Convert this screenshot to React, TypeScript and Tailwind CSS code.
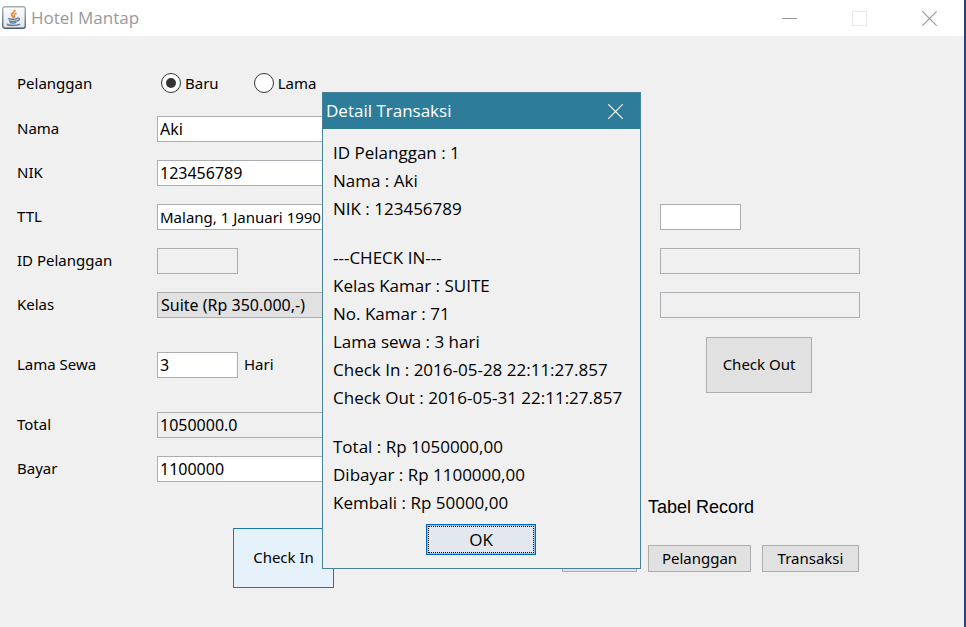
import type { InputHTMLAttributes, ReactNode } from "react";
import { clsx } from "clsx";

function JavaIcon() {
  return (
    <svg width="24" height="24" viewBox="0 0 24 24" fill="none" aria-hidden="true">
      <defs>
        <linearGradient id="tile" x1="0" y1="0" x2="0" y2="1">
          <stop offset="0" stopColor="#ffffff" />
          <stop offset="1" stopColor="#dde1e5" />
        </linearGradient>
        <linearGradient id="edge" x1="0" y1="0" x2="0" y2="1">
          <stop offset="0" stopColor="#a3abb3" />
          <stop offset="1" stopColor="#465a6b" />
        </linearGradient>
      </defs>
      <rect x="0.75" y="0.75" width="22.5" height="21.5" rx="2" fill="url(#tile)" stroke="url(#edge)" strokeWidth="1.3" />
      <path d="M12.800 4.300c.6 1.800-3.600 2.600-3.200 4.400.2 1 1.300 1.400 1.600 2.500" stroke="#e58a2e" strokeWidth="1.8" strokeLinecap="round" />
      <path d="M14.200 7.300c-1.800.7-2.500 1.400-1.800 2.300.4.6.3 1.100-.3 1.700" stroke="#e58a2e" strokeWidth="1.300" strokeLinecap="round" />
      <path d="M6.500 12.600c2.200.7 6.200.7 8.500 0M7.500 14.800c1.800.6 4.800.6 6.500 0M8.200 16.700c1.600.5 3.900.5 5.500 0" stroke="#55799b" strokeWidth="1.400" strokeLinecap="round" />
      <path d="M15.300 12.200c3-.6 2.800 2.200-.4 2.900" stroke="#55799b" strokeWidth="1.300" strokeLinecap="round" />
      <path d="M5.500 18.200c-1 1.300 9 1.600 12 .2" stroke="#55799b" strokeWidth="1.400" strokeLinecap="round" />
    </svg>
  );
}

function CrossIcon() {
  return (
    <svg width="15" height="15" viewBox="0 0 15 15" stroke="currentColor" aria-hidden="true">
      <path d="M0.300 0.300l14.400 14.400M14.700 0.300l-14.400 14.400" strokeWidth="1.100" />
    </svg>
  );
}

type FieldProps = InputHTMLAttributes<HTMLInputElement> & { compact?: boolean };

function Field({ className, compact, ...props }: FieldProps) {
  return (
    <input
      type="text"
      className={clsx(
        "h-[26px] border border-[#abadb3] px-0.5 pb-px outline-none",
        compact ? "text-[15px]" : "text-base",
        props.readOnly ? "bg-[#f0f0f0]" : "bg-white",
        className,
      )}
      {...props}
    />
  );
}

function Row({ label, id, children }: { label: string; id: string; children: ReactNode }) {
  return (
    <div className="flex h-[26px] items-center">
      <label htmlFor={id} className="w-[140px] shrink-0 pb-px">
        {label}
      </label>
      {children}
    </div>
  );
}

function Radio({ label, checked }: { label: string; checked?: boolean }) {
  return (
    <label className="flex items-center gap-1">
      <input
        type="radio"
        name="pelanggan"
        defaultChecked={checked}
        className="grid size-5 appearance-none place-items-center rounded-full border border-[#333333] bg-white before:size-[10px] before:rounded-full checked:before:bg-[#333333]"
      />
      {label}
    </label>
  );
}

const grayButton = "border border-[#adadad] bg-[#e1e1e1] pb-px";

const details = [
  ["ID Pelanggan : 1", "Nama : Aki", "NIK : 123456789"],
  [
    "---CHECK IN---",
    "Kelas Kamar : SUITE",
    "No. Kamar : 71",
    "Lama sewa : 3 hari",
    "Check In : 2016-05-28 22:11:27.857",
    "Check Out : 2016-05-31 22:11:27.857",
  ],
  ["Total : Rp 1050000,00", "Dibayar : Rp 1100000,00", "Kembali : Rp 50000,00"],
];

function DetailDialog() {
  return (
    <div className="absolute inset-0 flex items-start justify-center pt-[92px] pr-px">
      <div
        role="dialog"
        aria-labelledby="dialog-title"
        className="w-[319px] border border-[#47819a] bg-[#f0f0f0] font-['Open_Sans',sans-serif] text-[17px]"
      >
        <header className="flex h-9 items-center justify-between bg-[#2d7d9a] pr-[17px] pl-[3px] text-white">
          <h2 id="dialog-title">Detail Transaksi</h2>
          <button type="button" aria-label="Tutup">
            <CrossIcon />
          </button>
        </header>
        <div className="flex flex-col gap-[21px] px-[10px] pt-[10px] leading-7 whitespace-nowrap">
          {details.map((group) => (
            <div key={group[0]}>
              {group.map((line) => (
                <p key={line}>{line}</p>
              ))}
            </div>
          ))}
        </div>
        <div className="flex justify-center pt-[7px] pr-px pb-[13px]">
          <button type="button" className="h-[31px] w-[110px] border border-[#0067c0] bg-[#8fc0ee] p-px">
            <span className="flex h-full items-center justify-center border border-dotted border-black bg-[#e3e8f0]">
              OK
            </span>
          </button>
        </div>
      </div>
    </div>
  );
}

export default function App() {
  return (
    <div className="relative flex min-h-screen flex-col border-r-2 border-[#28456f] bg-[#f0f0f0] font-['Noto_Sans',sans-serif] text-[15px] text-black">
      <header className="flex h-9 items-center justify-between bg-white pr-[27px] pl-0.5 text-[#999999]">
        <div className="flex items-center gap-[5px]">
          <JavaIcon />
          <h1 className="font-['Open_Sans',sans-serif] text-[17px]">Hotel Mantap</h1>
        </div>
        <div className="flex items-center gap-[55px]">
          <button type="button" aria-label="Minimalkan" className="flex h-4 w-[15px] items-center">
            <span className="h-px w-full bg-[#999999]" />
          </button>
          <button type="button" aria-label="Maksimalkan" className="size-[15px] border border-[#e9e9e9]" />
          <button type="button" aria-label="Tutup">
            <CrossIcon />
          </button>
        </div>
      </header>

      <main className="flex justify-between pr-[104px] pl-[17px]">
        <form className="flex w-[340px] flex-col gap-[34px] pt-9">
          <div className="flex flex-col gap-[18px]">
            <fieldset className="flex h-[26px] items-center">
              <span className="w-[144px]">Pelanggan</span>
              <div className="flex gap-[35px]">
                <Radio label="Baru" checked />
                <Radio label="Lama" />
              </div>
            </fieldset>
            <Row label="Nama" id="nama">
              <Field id="nama" defaultValue="Aki" className="w-[200px]" />
            </Row>
            <Row label="NIK" id="nik">
              <Field id="nik" defaultValue="123456789" className="w-[200px]" />
            </Row>
            <Row label="TTL" id="ttl">
              <Field id="ttl" compact defaultValue="Malang, 1 Januari 1990" className="w-[200px]" />
            </Row>
            <Row label="ID Pelanggan" id="id-pelanggan">
              <Field id="id-pelanggan" readOnly className="w-[81px]" />
            </Row>
            <Row label="Kelas" id="kelas">
              <select
                id="kelas"
                className="h-[26px] w-[200px] appearance-none border border-[#adadad] bg-[#e1e1e1] px-[3px] pb-px text-base leading-5"
              >
                <option>Suite (Rp 350.000,-)</option>
              </select>
            </Row>
          </div>
          <Row label="Lama Sewa" id="lama-sewa">
            <Field id="lama-sewa" defaultValue="3" className="w-[81px]" />
            <span className="pb-px pl-1.5">Hari</span>
          </Row>
          <div className="flex flex-col gap-[18px]">
            <Row label="Total" id="total">
              <Field id="total" defaultValue="1050000.0" readOnly className="w-[200px]" />
            </Row>
            <Row label="Bayar" id="bayar">
              <Field id="bayar" defaultValue="1100000" className="w-[200px]" />
            </Row>
          </div>
          <button
            type="button"
            className="mt-3 mr-[23px] h-[60px] w-[101px] self-end border border-[#1a77b5] bg-[#e5f1fb] pb-px"
          >
            Check In
          </button>
        </form>

        <section className="flex flex-col items-end pt-[168px]">
          <div className="flex w-[200px] flex-col gap-[18px]">
            <Field aria-label="No. Kamar" className="w-[81px]" />
            <Field aria-label="Check In" readOnly />
            <Field aria-label="Check Out" readOnly />
          </div>
          <button type="button" className={clsx(grayButton, "mt-[19px] mr-12 h-14 w-[106px]")}>
            Check Out
          </button>
          <h2 className="mt-[102px] w-[212px] font-['Liberation_Sans',sans-serif] text-[18px] leading-6">
            Tabel Record
          </h2>
          <div className="mt-[26px] mr-px flex gap-[11px]">
            <button type="button" aria-label="Kamar" className={clsx(grayButton, "h-[27px] w-[75px]")} />
            <button type="button" className={clsx(grayButton, "h-[27px] w-[103px]")}>
              Pelanggan
            </button>
            <button type="button" className={clsx(grayButton, "h-[27px] w-[97px]")}>
              Transaksi
            </button>
          </div>
        </section>
      </main>

      <DetailDialog />
    </div>
  );
}
